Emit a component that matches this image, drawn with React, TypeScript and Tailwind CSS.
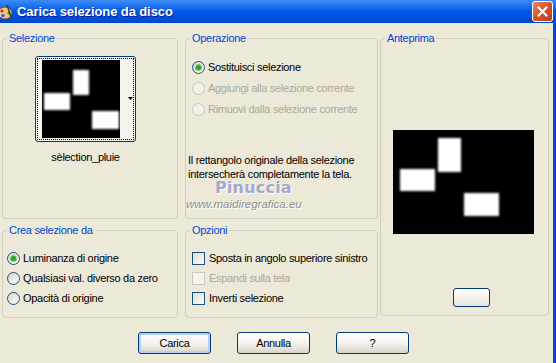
import React from "react";

const font = "font-['Liberation_Sans',Arial,sans-serif] text-[11px] tracking-[-0.3px]";

function Radio({ checked = false, disabled = false }: { checked?: boolean; disabled?: boolean }) {
    return (
        <span
            className={
                "flex w-[13px] h-[13px] shrink-0 items-center justify-center rounded-full border " +
                (disabled
                    ? "border-[#CAC8BB] bg-[#F2F0E7]"
                    : "border-[#1C5180] bg-linear-to-br from-[#D8D5C6] to-white")
            }
        >
            {checked && (
                <span className="w-[5px] h-[5px] rounded-full bg-[#2EA62E] shadow-[0_0_0_1px_#7CCB7C]" />
            )}
        </span>
    );
}

function Check({ disabled = false }: { disabled?: boolean }) {
    return (
        <span
            className={
                "block w-[13px] h-[13px] shrink-0 border " +
                (disabled
                    ? "border-[#CAC8BB] bg-[#F4F3EE]"
                    : "border-[#1C5180] bg-linear-to-br from-[#DCDCD7] to-white")
            }
        />
    );
}

function Group({ label, className, children }: { label: string; className: string; children?: React.ReactNode }) {
    return (
        <div className={"relative border border-[#D0D0BF] rounded-[4px] " + className}>
            <span className="absolute -top-[8px] left-[4px] px-[2px] bg-[#ECE9D8] leading-[14px] text-[#0046D5]">
                {label}
            </span>
            {children}
        </div>
    );
}

function XpButton({ label, primary = false }: { label: string; primary?: boolean }) {
    return (
        <button
            className={
                "w-[73px] h-[22px] rounded-[3px] border border-[#003C74] bg-linear-to-b from-white via-[#F4F3EE] to-[#D9D5CA] text-black " +
                (primary ? "shadow-[inset_0_0_0_2px_#B9CEF7]" : "")
            }
        >
            {label}
        </button>
    );
}

function Blob({ x, y, w, h }: { x: number; y: number; w: number; h: number }) {
    return <rect x={x} y={y} width={w} height={h} fill="#fff" filter="url(#soft)" />;
}

export default function App() {
    return (
        <div className={"w-[556px] h-[363px] overflow-hidden bg-[#ECE9D8] flex flex-col text-black " + font}>
            {/* title bar */}
            <div className="h-[23px] shrink-0 flex items-center bg-linear-to-b from-[#3B8CF5] via-[#0058E6] to-[#0047D0]">
                <svg width="15" height="16" viewBox="0 0 15 16" className="-ml-[2px] shrink-0">
                    <ellipse cx="7" cy="9" rx="7" ry="6" fill="#E9C79A" stroke="#7A4A1C" strokeWidth="1" />
                    <circle cx="4" cy="7" r="1.6" fill="#E02020" />
                    <circle cx="8" cy="6" r="1.6" fill="#F2D020" />
                    <circle cx="11" cy="9" r="1.6" fill="#2DA82D" />
                    <circle cx="5" cy="11.5" r="1.6" fill="#2050E0" />
                    <path d="M9 1 L13 13" stroke="#5A3210" strokeWidth="1.5" />
                </svg>
                <span className="ml-[4px] text-white font-bold text-[13px] tracking-[-0.1px] [text-shadow:1px_1px_0_#0A1F8F]">
                    Carica selezione da disco
                </span>
                <div className="ml-auto mr-[3px] w-[21px] h-[21px] rounded-[3px] border border-white bg-linear-to-br from-[#E98462] via-[#D9512B] to-[#B83A16] flex items-center justify-center">
                    <svg width="11" height="11" viewBox="0 0 11 11">
                        <path d="M1.5 1.5 L9.5 9.5 M9.5 1.5 L1.5 9.5" stroke="#fff" strokeWidth="2" strokeLinecap="square" />
                    </svg>
                </div>
            </div>

            <div className="flex flex-1">
                <div className="flex-1 flex flex-col pl-[2px] pt-[15px]">
                    <div className="flex">
                        {/* left column */}
                        <div className="w-[176px] flex flex-col">
                            <Group label="Selezione" className="h-[181px]">
                                <div className="flex flex-col items-center w-[101px] ml-[32px] mt-[17px]">
                                    <div className="w-[101px] h-[86px] rounded-[3px] border border-[#003C74] bg-[#F4F3EE] outline-1 outline-dotted outline-black -outline-offset-[3px] flex">
                                        <svg width="78" height="78" viewBox="0 0 78 78" className="ml-[6px] mt-[3px]">
                                            <defs>
                                                <filter id="soft" x="-20%" y="-20%" width="140%" height="140%">
                                                    <feGaussianBlur stdDeviation="0.9" />
                                                </filter>
                                            </defs>
                                            <rect width="78" height="78" fill="#000" />
                                            <Blob x={31} y={10} w={16} h={25} />
                                            <Blob x={2} y={33} w={26} h={17} />
                                            <Blob x={50} y={51} w={27} h={18} />
                                        </svg>
                                        <svg width="5" height="3" viewBox="0 0 5 3" className="ml-[8px] mt-[40px]">
                                            <path d="M0 0 H5 L2.5 3 Z" fill="#000" />
                                        </svg>
                                    </div>
                                    <span className="mt-[8px] leading-[14px] whitespace-nowrap">sèlection_pluie</span>
                                </div>
                            </Group>
                            <Group label="Crea selezione da" className="mt-[11px] h-[88px]">
                                <div className="flex flex-col mt-[17px] pl-[4px]">
                                    <div className="h-[20px] flex items-center gap-[3px]">
                                        <Radio checked />
                                        <span>Luminanza di origine</span>
                                    </div>
                                    <div className="h-[20px] flex items-center gap-[3px]">
                                        <Radio />
                                        <span>Qualsiasi val. diverso da zero</span>
                                    </div>
                                    <div className="h-[20px] flex items-center gap-[3px]">
                                        <Radio />
                                        <span>Opacità di origine</span>
                                    </div>
                                </div>
                            </Group>
                        </div>

                        {/* middle column */}
                        <div className="w-[193px] ml-[7px] flex flex-col">
                            <Group label="Operazione" className="h-[181px]">
                                <div className="flex flex-col mt-[18px] pl-[6px]">
                                    <div className="h-[21px] flex items-center gap-[3px]">
                                        <Radio checked />
                                        <span>Sostituisci selezione</span>
                                    </div>
                                    <div className="h-[21px] flex items-center gap-[3px] text-[#ACA899]">
                                        <Radio disabled />
                                        <span>Aggiungi alla selezione corrente</span>
                                    </div>
                                    <div className="h-[21px] flex items-center gap-[3px] text-[#ACA899]">
                                        <Radio disabled />
                                        <span>Rimuovi dalla selezione corrente</span>
                                    </div>
                                </div>
                                <p className="mt-[33px] pl-[2px] leading-[14px]">
                                    Il rettangolo originale della selezione
                                    <br />
                                    intersecherà completamente la tela.
                                </p>
                                {/* watermark over the dialog */}
                                <span className="absolute left-[29px] top-[137px] text-[16px] font-bold tracking-[0.2px] text-[#A6A7D0] font-['DejaVu_Sans',sans-serif] [text-shadow:1px_1px_0_#fff]">
                                    Pinuccia
                                </span>
                                <span className="absolute left-[0px] top-[157px] text-[11.5px] italic tracking-[0px] text-[#8E8E8E] [text-shadow:1px_1px_0_#fff]">
                                    www.maidiregrafica.eu
                                </span>
                            </Group>
                            <Group label="Opzioni" className="mt-[11px] h-[88px]">
                                <div className="flex flex-col mt-[17px] pl-[6px]">
                                    <div className="h-[20px] flex items-center gap-[4px]">
                                        <Check />
                                        <span>Sposta in angolo superiore sinistro</span>
                                    </div>
                                    <div className="h-[20px] flex items-center gap-[4px] text-[#ACA899]">
                                        <Check disabled />
                                        <span>Espandi sulla tela</span>
                                    </div>
                                    <div className="h-[20px] flex items-center gap-[4px]">
                                        <Check />
                                        <span>Inverti selezione</span>
                                    </div>
                                </div>
                            </Group>
                        </div>

                        {/* right column */}
                        <div className="w-[169px] ml-[2px]">
                            <Group label="Anteprima" className="h-[278px]">
                                <svg width="141" height="104" viewBox="0 0 141 104" className="ml-[12px] mt-[91px]">
                                    <rect width="141" height="104" fill="#000" />
                                    <Blob x={45} y={8} w={23} h={34} />
                                    <Blob x={7} y={39} w={35} h={22} />
                                    <Blob x={71} y={63} w={35} h={23} />
                                </svg>
                                <div className="ml-[72px] mt-[54px] w-[37px] h-[19px] rounded-[3px] border border-[#003C74] bg-linear-to-b from-white to-[#E6E4DC]" />
                            </Group>
                        </div>
                    </div>

                    {/* buttons */}
                    <div className="flex mt-[14px] ml-[136px] gap-[26px]">
                        <XpButton label="Carica" primary />
                        <XpButton label="Annulla" />
                        <XpButton label="?" />
                    </div>
                </div>
                <div className="w-[3px] bg-[#0842D6]" />
            </div>
        </div>
    );
}
